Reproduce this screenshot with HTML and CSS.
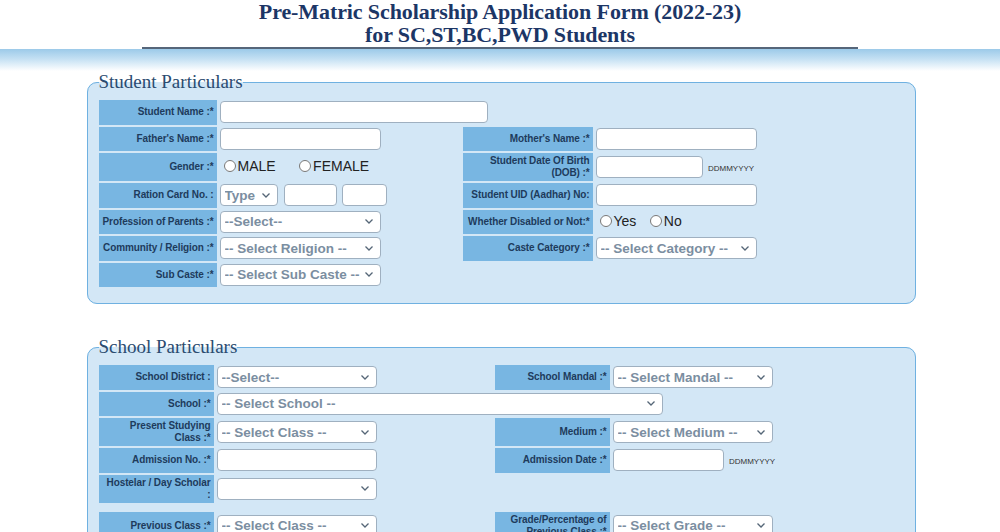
FILE: index.html
```html
<!DOCTYPE html>
<html>
<head>
  <title>Pre-Matric Scholarship Application Form</title>
  <link rel="stylesheet" href="styles.css">
</head>
<body>
  <div class="header">
    <h1 class="title">Pre-Matric Scholarship Application Form (2022-23)<br>for SC,ST,BC,PWD Students</h1>
  </div>
  <div class="band"></div>

  <div class="content">
    <fieldset class="box">
      <legend>Student Particulars</legend>
      <table class="form student">
        <colgroup>
          <col style="width:118px">
          <col style="width:242px">
          <col style="width:130px">
          <col>
        </colgroup>
        <tr>
          <td class="lbl">Student Name :*</td>
          <td colspan="3"><input type="text" class="txt w268"></td>
        </tr>
        <tr>
          <td class="lbl">Father's Name :*</td>
          <td><input type="text" class="txt w161"></td>
          <td class="lbl">Mother's Name :*</td>
          <td><input type="text" class="txt w161"></td>
        </tr>
        <tr class="tall">
          <td class="lbl">Gender :*</td>
          <td>
            <label class="opt"><input type="radio" name="gender">MALE</label>
            <label class="opt"><input type="radio" name="gender">FEMALE</label>
          </td>
          <td class="lbl">Student Date Of Birth (DOB) :*</td>
          <td><input type="text" class="txt w107"> <span class="hint">DDMMYYYY</span></td>
        </tr>
        <tr>
          <td class="lbl">Ration Card No. :</td>
          <td>
            <select class="sel w58"><option>Type</option></select>
            <input type="text" class="txt w53">
            <input type="text" class="txt w45">
          </td>
          <td class="lbl">Student UID (Aadhar) No:</td>
          <td><input type="text" class="txt w161"></td>
        </tr>
        <tr>
          <td class="lbl">Profession of Parents :*</td>
          <td><select class="sel w161"><option>--Select--</option></select></td>
          <td class="lbl">Whether Disabled or Not:*</td>
          <td>
            <label class="opt small"><input type="radio" name="disabled">Yes</label>
            <label class="opt small"><input type="radio" name="disabled">No</label>
          </td>
        </tr>
        <tr>
          <td class="lbl">Community / Religion :*</td>
          <td><select class="sel w161"><option>-- Select Religion --</option></select></td>
          <td class="lbl">Caste Category :*</td>
          <td><select class="sel w161"><option>-- Select Category --</option></select></td>
        </tr>
        <tr>
          <td class="lbl">Sub Caste :*</td>
          <td><select class="sel w161"><option>-- Select Sub Caste --</option></select></td>
          <td></td>
          <td></td>
        </tr>
      </table>
    </fieldset>

    <fieldset class="box">
      <legend>School Particulars</legend>
      <table class="form school">
        <colgroup>
          <col style="width:115px">
          <col style="width:277px">
          <col style="width:115px">
          <col>
        </colgroup>
        <tr>
          <td class="lbl">School District :</td>
          <td><select class="sel w160"><option>--Select--</option></select></td>
          <td class="lbl">School Mandal :*</td>
          <td><select class="sel w160"><option>-- Select Mandal --</option></select></td>
        </tr>
        <tr>
          <td class="lbl">School :*</td>
          <td colspan="3"><select class="sel w446"><option>-- Select School --</option></select></td>
        </tr>
        <tr class="tall">
          <td class="lbl">Present Studying Class :*</td>
          <td><select class="sel w160"><option>-- Select Class --</option></select></td>
          <td class="lbl">Medium :*</td>
          <td><select class="sel w160"><option>-- Select Medium --</option></select></td>
        </tr>
        <tr>
          <td class="lbl">Admission No. :*</td>
          <td><input type="text" class="txt w160"></td>
          <td class="lbl">Admission Date :*</td>
          <td><input type="text" class="txt w111"> <span class="hint">DDMMYYYY</span></td>
        </tr>
        <tr class="tall">
          <td class="lbl">Hostelar / Day Scholar :</td>
          <td><select class="sel w160"><option></option></select></td>
          <td></td>
          <td></td>
        </tr>
        <tr class="spacer"><td colspan="4"></td></tr>
        <tr class="tall">
          <td class="lbl">Previous Class :*</td>
          <td><select class="sel w160"><option>-- Select Class --</option></select></td>
          <td class="lbl">Grade/Percentage of Previous Class :*</td>
          <td><select class="sel w160"><option>-- Select Grade --</option></select></td>
        </tr>
      </table>
    </fieldset>
  </div>
</body>
</html>
```

FILE: styles.css
```css
body {
  margin: 0;
  padding: 0;
  background-color: #fff;
  font-family: "Liberation Sans", Arial, sans-serif;
}

.header {
  width: 716px;
  margin: 0 auto;
  border-bottom: 2px solid #56667a;
}

.title {
  margin: 0;
  padding: 0 0 1px;
  font-family: "Liberation Serif", "Times New Roman", serif;
  font-size: 22px;
  line-height: 23px;
  font-weight: bold;
  text-align: center;
  color: #1c3666;
  letter-spacing: -0.1px;
}

.band {
  height: 22px;
  background: linear-gradient(to bottom, #9ccae9 0%, #c4e0f3 45%, #ffffff 100%);
}

.content {
  width: 827px;
  margin: 0 auto;
}

.box {
  margin: 0 0 32px;
  padding: 5px 8px 14px 9px;
  border: 1px solid #6fb1e1;
  border-radius: 10px;
  background-color: #d3e7f6;
}

.box legend {
  padding: 0;
  margin-left: 2px;
  font-family: "Liberation Serif", "Times New Roman", serif;
  font-size: 19px;
  color: #2a4b70;
}

.form {
  border-spacing: 2px;
  width: 810px;
  table-layout: fixed;
}

.form td {
  height: 24.5px;
  padding: 0;
  vertical-align: middle;
}

.form tr.tall td {
  height: 28px;
}

.form tr.spacer td {
  height: 5px;
}

.lbl {
  background-color: #78b6e2;
  color: #1e3b5c;
  font-size: 10px;
  font-weight: bold;
  letter-spacing: -0.1px;
  text-align: right;
  padding: 0 3px 0 2px !important;
  line-height: 12px;
}

.school .lbl {
  padding-left: 7px !important;
}

.txt, .sel {
  box-sizing: border-box;
  height: 22px;
  margin: 0 0 0 1px;
  border: 1px solid #9fb0c0;
  border-radius: 4px;
  background-color: #fff;
  vertical-align: middle;
  font-family: "Liberation Sans", Arial, sans-serif;
}

.sel {
  appearance: none;
  -webkit-appearance: none;
  padding: 0 18px 0 4px;
  font-size: 13.5px;
  font-weight: bold;
  color: #7b8ea1;
  background-image: url("data:image/svg+xml,%3Csvg xmlns='http://www.w3.org/2000/svg' width='8' height='5'%3E%3Cpath d='M0.5 0.5 L4 4 L7.5 0.5' fill='none' stroke='%23556677' stroke-width='1.3'/%3E%3C/svg%3E");
  background-repeat: no-repeat;
  background-position: right 7px center;
}

.w45 { width: 45px; }
.w53 { width: 53px; margin-left: 2px; }
.w58 { width: 58px; }
.w107 { width: 107px; }
.w111 { width: 111px; }
.w160 { width: 160px; }
.w161 { width: 161px; }
.w268 { width: 268px; }
.w446 { width: 446px; }

.hint {
  font-size: 8px;
  color: #333;
  margin-left: 1px;
}

.opt {
  display: inline-flex;
  align-items: center;
  font-size: 14px;
  color: #222;
  margin-left: 3px;
  margin-right: 14px;
}

.opt.small {
  margin-right: 4px;
}

.opt input {
  width: 12px;
  height: 12px;
  margin: 0 2px 0 2px;
}
```
